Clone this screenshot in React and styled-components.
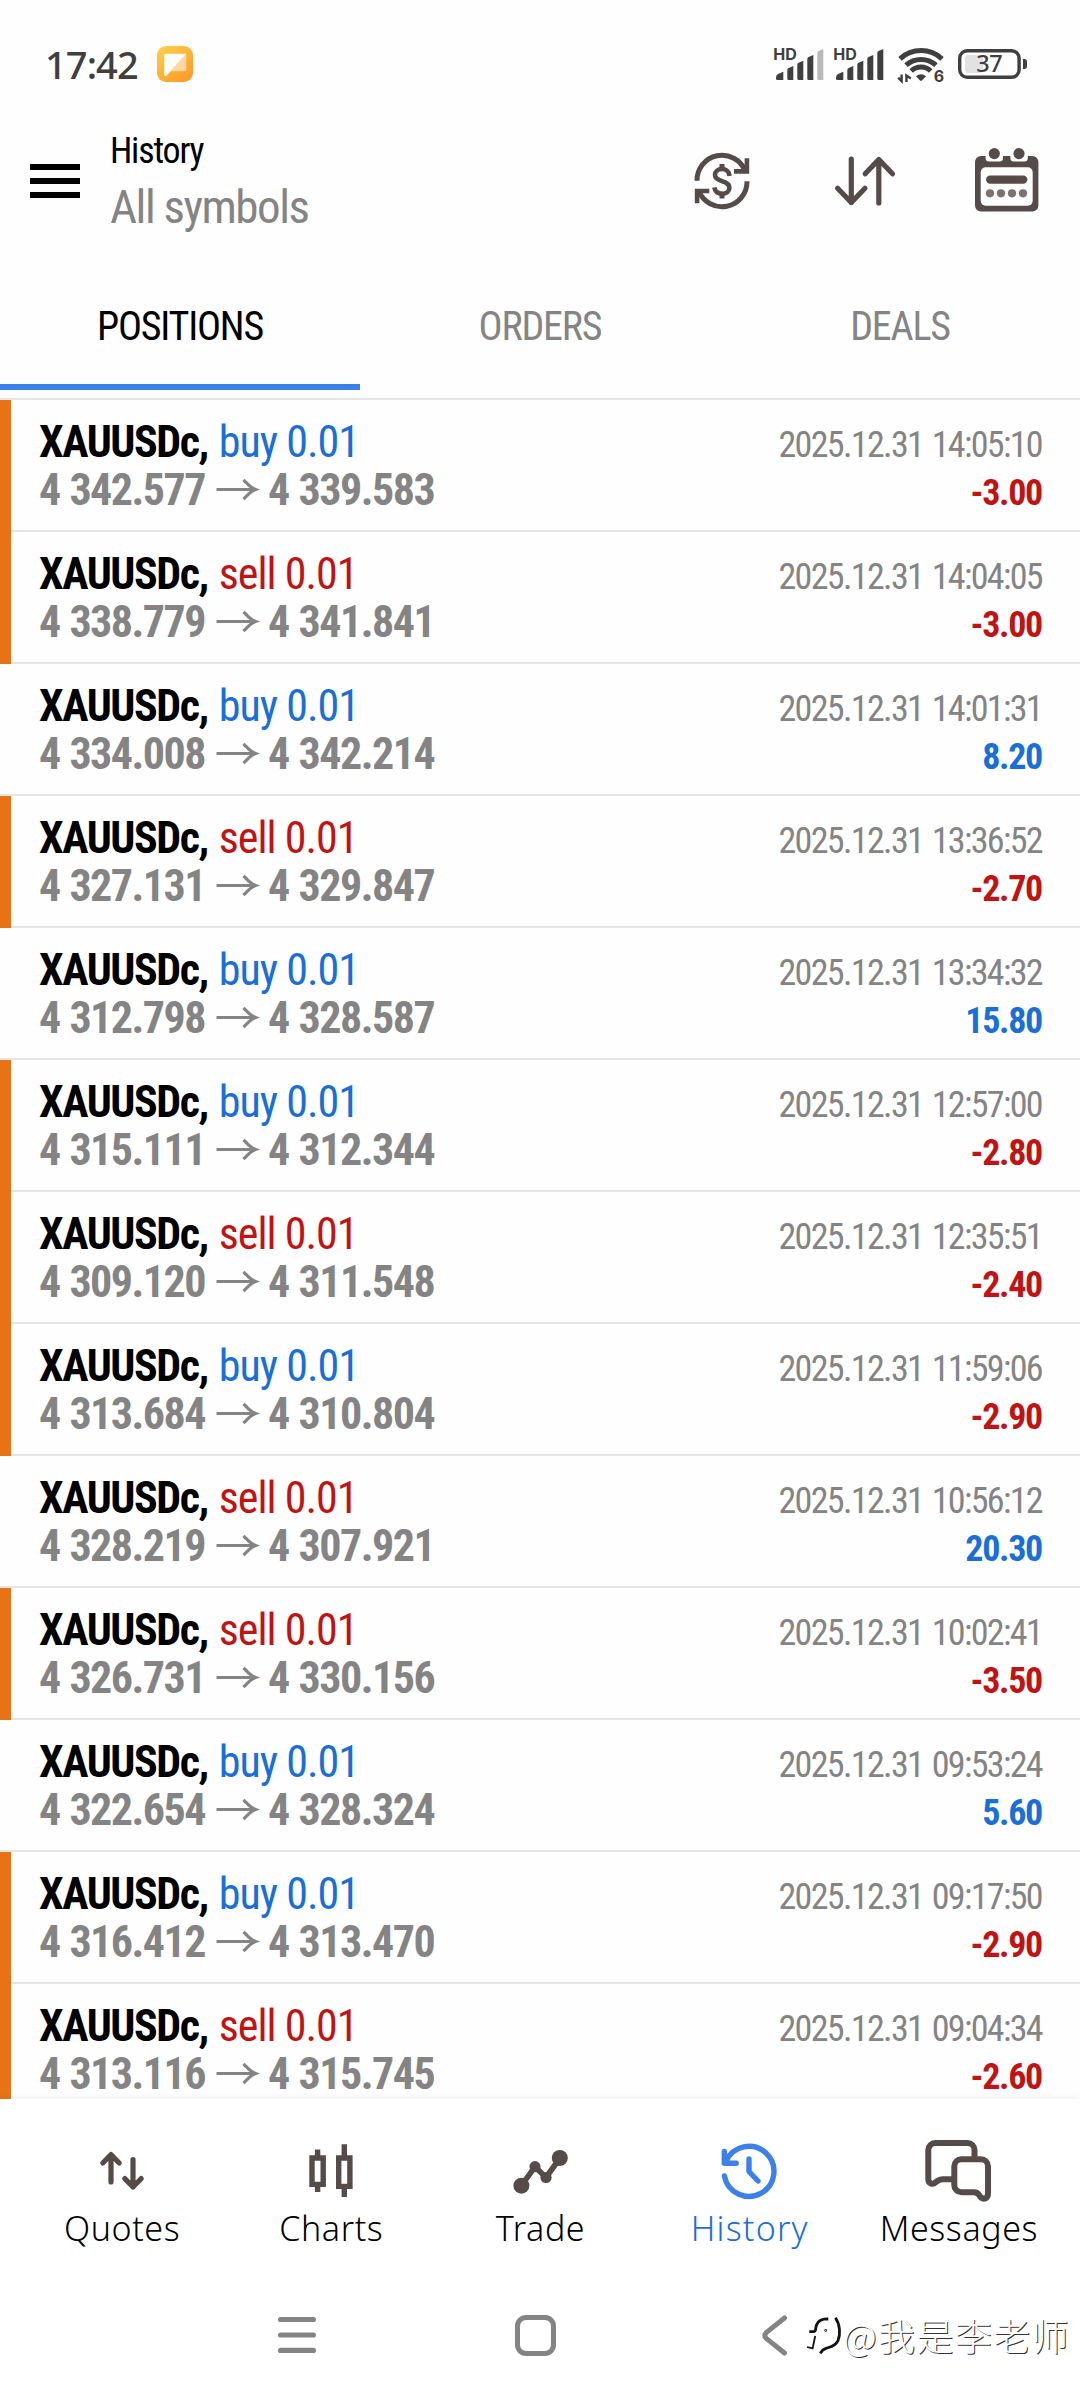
import styled, { createGlobalStyle } from "styled-components";

const positions = [
    { side: "buy", open: "4 342.577", close: "4 339.583", time: "2025.12.31 14:05:10", profit: "-3.00" },
    { side: "sell", open: "4 338.779", close: "4 341.841", time: "2025.12.31 14:04:05", profit: "-3.00" },
    { side: "buy", open: "4 334.008", close: "4 342.214", time: "2025.12.31 14:01:31", profit: "8.20" },
    { side: "sell", open: "4 327.131", close: "4 329.847", time: "2025.12.31 13:36:52", profit: "-2.70" },
    { side: "buy", open: "4 312.798", close: "4 328.587", time: "2025.12.31 13:34:32", profit: "15.80" },
    { side: "buy", open: "4 315.111", close: "4 312.344", time: "2025.12.31 12:57:00", profit: "-2.80" },
    { side: "sell", open: "4 309.120", close: "4 311.548", time: "2025.12.31 12:35:51", profit: "-2.40" },
    { side: "buy", open: "4 313.684", close: "4 310.804", time: "2025.12.31 11:59:06", profit: "-2.90" },
    { side: "sell", open: "4 328.219", close: "4 307.921", time: "2025.12.31 10:56:12", profit: "20.30" },
    { side: "sell", open: "4 326.731", close: "4 330.156", time: "2025.12.31 10:02:41", profit: "-3.50" },
    { side: "buy", open: "4 322.654", close: "4 328.324", time: "2025.12.31 09:53:24", profit: "5.60" },
    { side: "buy", open: "4 316.412", close: "4 313.470", time: "2025.12.31 09:17:50", profit: "-2.90" },
    { side: "sell", open: "4 313.116", close: "4 315.745", time: "2025.12.31 09:04:34", profit: "-2.60" },
];

const SignalIcon = ({ weak }) => (
    <svg width="50" height="32" viewBox="0 0 50 32" fill="#3f3f3f">
        <HdText x="-0.8" y="12">HD</HdText>
        <path d="M2 29.5Q2 27 4 26L9.3 23.7V32H3.5Q2 32 2 30.5z" />
        <path d="M13.3 22Q13.3 20.6 14.6 20L19.3 18V32H14.8Q13.3 32 13.3 30.5z" />
        <path d="M23.3 17Q23.3 15.4 24.6 14.8L29.3 12.7V32H24.8Q23.3 32 23.3 30.5z" />
        <path d="M33.3 11Q33.3 9.6 34.6 9L39.3 7V32H34.8Q33.3 32 33.3 30.5z" />
        <path d="M43.3 5Q43.3 3.6 44.6 3L49.3 1V32H44.8Q43.3 32 43.3 30.5z" fill={weak ? "#b9b9b9" : "#3f3f3f"} />
    </svg>
);

const WifiIcon = () => (
    <svg width="48" height="37" viewBox="0 0 48 37" fill="none" stroke="#3f3f3f" strokeWidth="5">
        <path d="M3 12.8A31 31 0 0 1 45 12.8" />
        <path d="M9 19.2A22.3 22.3 0 0 1 39 19.2" />
        <path d="M14.3 25A14 14 0 0 1 33.7 25" />
        <path d="M19 30.2Q24 26.2 29 30.2L25.2 34.2Q24 35.3 22.8 34.2z" fill="#3f3f3f" stroke="none" />
        <path d="M1.2 31.6L4.6 35V28.4M9.4 36V29.6L13.8 32.6" strokeWidth="2.4" />
        <HdText x="36.8" y="36.2">6</HdText>
    </svg>
);

const BatteryIcon = () => (
    <svg width="70" height="30" viewBox="0 0 70 30">
        <rect x="7" y="6" width="18" height="18" rx="3" fill="#e2e2e2" />
        <rect x="1.7" y="1.7" width="59.4" height="26.6" rx="7.5" fill="none" stroke="#3f3f3f" strokeWidth="3.4" />
        <path d="M65 10H66.2Q69 10 69 13V17Q69 20 66.2 20H65z" fill="#3f3f3f" />
        <BatteryText x="31.2" y="23.4" textAnchor="middle">37</BatteryText>
    </svg>
);

const AppBadge = () => (
    <svg width="36" height="36" viewBox="0 0 36 36">
        <defs>
            <linearGradient id="badge" x1="0" y1="0" x2="0.7" y2="1">
                <stop offset="0" stopColor="#fdd04c" />
                <stop offset="1" stopColor="#fc9d2c" />
            </linearGradient>
        </defs>
        <rect width="36" height="36" rx="9" fill="url(#badge)" />
        <path d="M29.3 8V23.8Q29.3 25.3 27.8 25.3H14z" fill="#fff" fillOpacity="0.5" />
        <path d="M8.5 7.8H29.5L9.6 29.8Q7.4 31 7.2 28.6V9.2Q7.2 7.8 8.5 7.8z" fill="#fff" fillOpacity="0.95" />
    </svg>
);

const CurrencyIcon = () => (
    <svg width="56" height="56" viewBox="0 0 56 56" fill="none" stroke="#554b49" strokeWidth="5">
        <path d="M3 27.8A25 25 0 0 1 51.2 18" />
        <path d="M53 28.2A25 25 0 0 1 4.8 38" />
        <path d="M52.9 5.3V18.4H40M3.1 50.3V38H15.3" strokeWidth="4.6" />
        <path d="M28 11V16M28 40.5V45.5" />
        <path d="M35.6 23C35 18.4 31.8 16 28 16C23.8 16 21 18.5 21 21.8C21 25.4 24 27 28.2 28.2C32.8 29.5 35.4 31.4 35.4 35C35.4 38.4 32 40.7 28.2 40.7C24 40.7 21 38.6 20.4 34.4" strokeWidth="4.6" />
    </svg>
);

const SortIcon = () => (
    <svg width="60" height="50" viewBox="0 0 60 50" fill="none" stroke="#554b49" strokeWidth="5.2" strokeLinecap="round" strokeLinejoin="round">
        <path d="M16.3 3V46.5M2.6 32.3L16.3 46.5L30 32.3" />
        <path d="M43.8 47V3.5M30.2 17.8L43.8 3.5L57.5 17.8" />
    </svg>
);

const CalendarIcon = () => (
    <svg width="64" height="64" viewBox="0 0 64 64" fill="#554b49">
        <rect y="8" width="63.4" height="55.4" rx="6" />
        <path d="M10.6 6H28V10Q28 13.6 24.4 13.6H14.4Q10.6 13.6 10.6 10zM35.4 6H52.8V10Q52.8 13.6 49.2 13.6H39Q35.4 13.6 35.4 10z" fill="#fff" />
        <circle cx="19.3" cy="5.6" r="5.6" />
        <circle cx="44" cy="5.6" r="5.6" />
        <rect x="5.7" y="19.3" width="52" height="38.4" rx="5" fill="#fff" />
        <rect x="11" y="27.4" width="41.4" height="8.4" rx="4.2" />
        <g fill="#7b7270">
            <circle cx="15" cy="45.3" r="4.1" />
            <circle cx="26" cy="45.3" r="4.1" />
            <circle cx="37" cy="45.3" r="4.1" />
            <circle cx="48" cy="45.3" r="4.1" />
        </g>
    </svg>
);

const ArrowIcon = () => (
    <svg width="41" height="22" viewBox="0 0 41 22" fill="none" stroke="#848484" strokeWidth="3.2">
        <path d="M0.5 10.5H39M27.5 0.8L32.5 5.8Q35.5 9 39.5 10.5Q35.5 12 32.5 15.2L27.5 20.2" />
    </svg>
);

const QuotesIcon = () => (
    <svg width="44" height="40" viewBox="0 0 44 40" fill="none" stroke="#554b49" strokeWidth="5.2" strokeLinecap="round" strokeLinejoin="round">
        <path d="M11 31V3.6M2.8 12L11 3.6L19.2 12" />
        <path d="M33 8.6V36M24.8 27.6L33 36L41.2 27.6" />
    </svg>
);

const ChartsIcon = () => (
    <svg width="44" height="54" viewBox="0 0 44 54" fill="none" stroke="#554b49" strokeWidth="5.4">
        <path d="M3 14H14.2V40.4H3zM29.7 14H40.9V42.4H29.7z" />
        <path d="M8.6 5.6V14M8.6 40V48M35.3 0.3V14M35.3 42V53" />
    </svg>
);

const TradeIcon = () => (
    <svg width="55" height="45" viewBox="0 0 55 45" fill="#554b49">
        <path d="M8.4 36.7L22 17.7L33 28.5L47 9" fill="none" stroke="#554b49" strokeWidth="5.6" />
        <circle cx="8.4" cy="36.7" r="8" />
        <circle cx="22" cy="17.7" r="5.6" />
        <circle cx="33" cy="28.5" r="5.6" />
        <circle cx="46.8" cy="9" r="8" />
    </svg>
);

const HistoryIcon = () => (
    <svg width="56" height="56" viewBox="0 0 56 56" fill="none" stroke="#3c80ea" strokeWidth="5.4" strokeLinecap="round" strokeLinejoin="round">
        <path d="M3.4 33A25 25 0 1 0 5 18.5" />
        <path d="M3.3 8.5V20.2H15.2" />
        <path d="M28 16V28.5L37 38" />
    </svg>
);

const MessagesIcon = () => (
    <svg width="66" height="62" viewBox="0 0 66 62" fill="none" stroke="#554b49" strokeWidth="6" strokeLinecap="round" strokeLinejoin="round">
        <path d="M49.5 17V10A7 7 0 0 0 42.5 3H10.3A7 7 0 0 0 3.3 10V39C3.3 43.5 7.5 45.2 11 42C13.8 39.5 15 39.2 18 39.2H27" />
        <path d="M36.3 19.3H56A7 7 0 0 1 63 26.3V53.5C63 58.4 59 59.8 56 57.5C53.5 55.2 54 52.2 49 52.2H36.3A7 7 0 0 1 29.3 45.2V26.3A7 7 0 0 1 36.3 19.3z" />
    </svg>
);

const RecentsIcon = () => (
    <svg width="38" height="40" viewBox="0 0 38 40" stroke="#848484" strokeWidth="5.2" strokeLinecap="round">
        <path d="M2.6 4.5H35.4M2.6 20H35.4M2.6 35.4H35.4" />
    </svg>
);

const HomeIcon = () => (
    <svg width="41" height="41" viewBox="0 0 41 41" fill="none" stroke="#848484" strokeWidth="5">
        <rect x="2.5" y="2.5" width="36" height="36" rx="8.5" />
    </svg>
);

const BackIcon = () => (
    <svg width="26" height="41" viewBox="0 0 26 41" fill="none" stroke="#848484" strokeWidth="5" strokeLinecap="round" strokeLinejoin="round">
        <path d="M22.5 3L4.2 17.6Q1.6 20.5 4.2 23.4L22.5 38" />
    </svg>
);

const WatermarkLogo = () => (
    <svg width="36" height="40" viewBox="0 0 36 40" fill="none" stroke="#111" strokeWidth="2">
        <path d="M3.3 16.6H7.5Q9.4 16.6 9.6 14.4Q10.4 5.2 18 4.2L22.3 4" strokeWidth="2.8" />
        <path d="M9.2 21L6.6 33.4L1 32" strokeWidth="1.8" />
        <path d="M29.4 2.8C34.4 10 34.4 20 32 25.6C29.4 31.2 24 32 20 33.4Q16 34.6 14.4 38.6" strokeWidth="2.8" />
        <circle cx="19.7" cy="15.4" r="0.4" />
    </svg>
);

const menu = [
    { label: "Quotes", icon: <QuotesIcon /> },
    { label: "Charts", icon: <ChartsIcon /> },
    { label: "Trade", icon: <TradeIcon /> },
    { label: "History", icon: <HistoryIcon />, active: true },
    { label: "Messages", icon: <MessagesIcon /> },
];

const App = () => {
    return (
        <Screen>
            <GlobalStyle />
            <StatusBar>
                <Clock>17:42</Clock>
                <AppBadge />
                <StatusIcons>
                    <SignalPair>
                        <SignalIcon weak />
                        <SignalIcon />
                    </SignalPair>
                    <WifiIcon />
                    <BatteryIcon />
                </StatusIcons>
            </StatusBar>
            <Header>
                <MenuButton>
                    <MenuLine />
                    <MenuLine />
                    <MenuLine />
                </MenuButton>
                <Titles>
                    <Title>History</Title>
                    <Subtitle>All symbols</Subtitle>
                </Titles>
                <Actions>
                    <CurrencyIcon />
                    <SortIcon />
                    <CalendarSlot><CalendarIcon /></CalendarSlot>
                </Actions>
            </Header>
            <Tabs>
                <Tab $active>POSITIONS</Tab>
                <Tab>ORDERS</Tab>
                <Tab>DEALS</Tab>
            </Tabs>
            <List>
                {positions.map((p) => {
                    const loss = p.profit.startsWith("-");
                    return (
                        <Row key={p.time} $loss={loss}>
                            <Deal>
                                <Line>
                                    <Ticker>XAUUSDc,</Ticker>
                                    <Side $sell={p.side === "sell"}>{p.side} 0.01</Side>
                                </Line>
                                <Prices>
                                    {p.open}
                                    <ArrowIcon />
                                    {p.close}
                                </Prices>
                            </Deal>
                            <Result>
                                <Time>{p.time}</Time>
                                <Profit $loss={loss}>{p.profit}</Profit>
                            </Result>
                        </Row>
                    );
                })}
            </List>
            <BottomMenu>
                {menu.map((m) => (
                    <MenuItem key={m.label}>
                        <IconBox>{m.icon}</IconBox>
                        <MenuLabel $active={m.active}>{m.label}</MenuLabel>
                    </MenuItem>
                ))}
            </BottomMenu>
            <SystemNav>
                <NavKey><RecentsIcon /></NavKey>
                <NavKey><HomeIcon /></NavKey>
                <NavKey><BackIcon /></NavKey>
                <Watermark>
                    <WatermarkLogo />
                    <WatermarkText>@我是李老师</WatermarkText>
                </Watermark>
            </SystemNav>
        </Screen>
    );
}

export default App;


const GlobalStyle = createGlobalStyle`
    body {
        margin: 0;
        background: #fefefe;
    }

    svg {
        display: block;
        flex: none;
        overflow: visible;
    }
`

const Screen = styled.div`
    display: flex;
    flex-direction: column;
    width: 1080px;
    height: 2400px;
    overflow: hidden;
    background: #fefefe;
    font-family: "Roboto Condensed", Roboto, sans-serif;
`

const StatusBar = styled.div`
    display: flex;
    align-items: center;
    height: 128px;
    padding: 0 52px 0 45px;
    box-sizing: border-box;
    color: #3f3f3f;
`

const Clock = styled.span`
    width: 112px;
    font: 500 38px/48px "Noto Sans", sans-serif;
    letter-spacing: -0.9px;
`

const StatusIcons = styled.div`
    display: flex;
    align-items: center;
    gap: 13px;
    margin-left: auto;
`

const SignalPair = styled.div`
    display: flex;
    gap: 10px;
`

const HdText = styled.text`
    font: 700 16px Inter, sans-serif;
    fill: #3f3f3f;
    stroke: none;
`

const BatteryText = styled.text`
    font: 500 23.5px "Noto Sans", sans-serif;
    letter-spacing: -0.6px;
    fill: #3f3f3f;
`

const Header = styled.div`
    display: flex;
    align-items: center;
    height: 106px;
    padding: 0 41px 0 30px;
`

const MenuButton = styled.div`
    display: flex;
    flex-direction: column;
    gap: 8px;
    width: 50px;
    margin-right: 30px;
`

const MenuLine = styled.div`
    height: 6px;
    background: #000;
`

const Titles = styled.div`
    padding-top: 2px;
`

const Title = styled.div`
    font-size: 36px;
    line-height: 48px;
    letter-spacing: -1.2px;
    color: #000;
`

const Subtitle = styled.div`
    font-size: 47px;
    line-height: 63px;
    letter-spacing: -1.5px;
    color: #848484;
`

const Actions = styled.div`
    display: flex;
    align-items: center;
    gap: 85px;
    margin-left: auto;
`

const CalendarSlot = styled.div`
    margin-left: -5px;
    padding-bottom: 3px;
`

const Tabs = styled.div`
    display: flex;
    height: 128px;
    margin: 28px 0 8px;
`

const Tab = styled.div`
    flex: 1;
    display: flex;
    align-items: center;
    justify-content: center;
    padding-top: 6px;
    border-bottom: 6px solid ${(p) => (p.$active ? "#3c80ea" : "transparent")};
    color: ${(p) => (p.$active ? "#000" : "#848484")};
    font-size: 40px;
    letter-spacing: -1.2px;
`

const List = styled.div`
    flex: 1;
    min-height: 0;
    overflow: hidden;
    border-top: 2px solid #e5e5e5;
`

const Row = styled.div`
    display: flex;
    justify-content: space-between;
    box-sizing: border-box;
    height: 132px;
    padding: 18px 38px 0 28px;
    border-left: 11px solid ${(p) => (p.$loss ? "#e87317" : "transparent")};
    background: linear-gradient(#e5e5e5, #e5e5e5) bottom / 100% 2px no-repeat;
    background-origin: ${(p) => (p.$loss ? "padding-box" : "border-box")};
`

const Deal = styled.div`
    font-size: 44px;
    line-height: 48px;
`

const Line = styled.div`
    display: flex;
    gap: 11px;
`

const Ticker = styled.span`
    font-weight: 700;
    letter-spacing: -1.45px;
    color: #000;
`

const Side = styled.span`
    letter-spacing: -1px;
    color: ${(p) => (p.$sell ? "#c01414" : "#1a6fd6")};
`

const Prices = styled.div`
    display: flex;
    align-items: center;
    gap: 11px;
    font-weight: 700;
    letter-spacing: -1.5px;
    word-spacing: 1px;
    color: #848484;
`

const Result = styled.div`
    padding-top: 3px;
    text-align: right;
    font-size: 36px;
    line-height: 48px;
`

const Time = styled.div`
    letter-spacing: -1.65px;
    word-spacing: 2px;
    color: #848484;
`

const Profit = styled.div`
    font-weight: 700;
    letter-spacing: -1.3px;
    color: ${(p) => (p.$loss ? "#c01414" : "#1a6fd6")};
`

const BottomMenu = styled.div`
    display: flex;
    box-sizing: border-box;
    height: 171px;
    padding: 40px 17px 0;
    background: #fff;
    box-shadow: 0 -2px 8px rgba(0, 0, 0, 0.05);
`

const MenuItem = styled.div`
    flex: 1;
    display: flex;
    flex-direction: column;
    align-items: center;
`

const IconBox = styled.div`
    display: flex;
    align-items: center;
    height: 64px;
`

const MenuLabel = styled.span`
    padding-left: 1px;
    font: 300 34px/51px "Noto Sans", sans-serif;
    letter-spacing: ${(p) => (p.$active ? "1.2px" : "0.6px")};
    color: ${(p) => (p.$active ? "#1a6fd6" : "#000")};
`

const SystemNav = styled.div`
    position: relative;
    display: flex;
    align-items: center;
    height: 130px;
    padding-left: 177px;
    background: #fff;
`

const NavKey = styled.div`
    display: flex;
    justify-content: center;
    width: 239px;
`

const Watermark = styled.div`
    position: absolute;
    right: 10px;
    top: 43px;
    display: flex;
    align-items: center;
    gap: 1px;
`

const WatermarkText = styled.span`
    font: 300 37px/44px "Noto Sans CJK SC", sans-serif;
    letter-spacing: 1.4px;
    white-space: nowrap;
    color: #fff;
    text-shadow: 1px 1px 0.5px #333;
`
